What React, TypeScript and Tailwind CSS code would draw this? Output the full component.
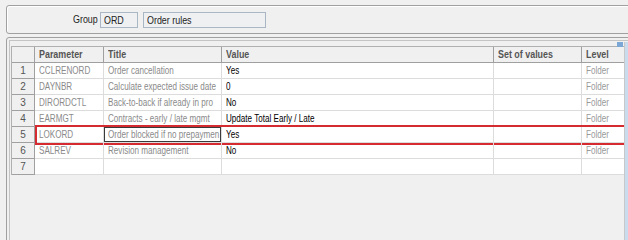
const rows: [number, string, string, string, string][] = [
  [1, "CCLRENORD", "Order cancellation", "Yes", "Folder"],
  [2, "DAYNBR", "Calculate expected issue date", "0", "Folder"],
  [3, "DIRORDCTL", "Back-to-back if already in pro", "No", "Folder"],
  [4, "EARMGT", "Contracts - early / late mgmt", "Update Total Early / Late", "Folder"],
  [5, "LOKORD", "Order blocked if no prepaymen", "Yes", "Folder"],
  [6, "SALREV", "Revision management", "No", "Folder"],
  [7, "", "", "", ""],
];

// the screenshot is squeezed sideways, so text is narrowed with scale-x
function T({ children }: { children: React.ReactNode }) {
  return <span className="inline-block origin-left scale-x-[0.81] whitespace-nowrap">{children}</span>;
}

const cell = "h-full overflow-hidden border-r border-b border-[#dcdcdc] pl-[4px] leading-[15px]";
const head = "h-full overflow-hidden border-r border-b border-[#a0a0a0] pl-[4px] leading-[15px]";

export default function App() {
  return (
    <div
      className="relative h-[240px] w-[628px] overflow-hidden bg-[#f0f0f0] text-[10px] text-[#222]"
      style={{ fontFamily: '"Liberation Sans", Arial, sans-serif' }}
    >
      {/* group header panel */}
      <div className="ml-[6px] mt-[5px] flex h-[29px] w-[630px] items-center rounded-[3px] border border-[#a0a0a0] shadow-[inset_1px_1px_0_#fff]">
        <span className="ml-[66px] w-[26px] text-[11px]"><T>Group</T></span>
        <div className="ml-[1px] h-[16px] w-[38px] overflow-hidden border border-[#a9b6c4] bg-[#eef0f2] pl-[3px] text-[11px] leading-[14px]"><T>ORD</T></div>
        <div className="ml-[5px] h-[16px] w-[123px] overflow-hidden border border-[#a9b6c4] bg-[#eef0f2] pl-[3px] text-[11px] leading-[14px]"><T>Order rules</T></div>
      </div>

      {/* parameters panel */}
      <div className="ml-[6px] mt-[3px] h-[220px] w-[630px] rounded-tl-[3px] border border-[#a0a0a0] pl-[2px] pt-[2px]">
        <div className="relative h-full border-l border-t border-[#c4c4c4] pl-[1px] pt-[5px]">
          <div className="absolute right-[12px] top-[1px] h-[5px] w-[6px] bg-[#7aa7d6]" />
          <div className="w-[614px] border-l border-t border-[#b0b0b0] bg-white">
            {/* header */}
            <div className="flex h-[16px] bg-[#f0f0f0] text-[11px] font-bold text-[#555]">
              <div className="h-full w-[23px] border-r border-b border-[#a0a0a0]" />
              <div className={`${head} w-[69px]`}><T>Parameter</T></div>
              <div className={`${head} w-[118px]`}><T>Title</T></div>
              <div className={`${head} w-[273px]`}><T>Value</T></div>
              <div className={`${head} w-[88px]`}><T>Set of values</T></div>
              <div className={`${head} w-[43px] pl-[3px]`}><T>Level</T></div>
            </div>
            {rows.map(([n, param, title, value, level]) => {
              const hit = n === 5;
              return (
                <div key={n} className="relative flex h-[16px]">
                  <div className="h-full w-[23px] border-r border-b border-[#a0a0a0] bg-[#f0f0f0] text-center leading-[15px] text-[#555]">{n}</div>
                  <div className={`${cell} w-[69px] text-[#8a8a8a]`}><T>{param}</T></div>
                  <div className={`${cell} relative w-[118px] text-[#8a8a8a]`}>
                    <T>{title}</T>
                    {hit && <div className="absolute inset-0 border border-[#3a3a3a]" />}
                  </div>
                  <div className={`${cell} w-[273px] text-black`}><T>{value}</T></div>
                  <div className={`${cell} w-[88px]`} />
                  <div className={`${cell} w-[43px] pl-[3px] text-[#999]`}><T>{level}</T></div>
                  {hit && (
                    <div className="absolute bottom-[-2px] left-[23px] right-[-2px] top-[-2px] border-2 border-[#d52b30]" />
                  )}
                </div>
              );
            })}
          </div>
        </div>
      </div>
      <div className="absolute right-0 top-[42px] h-[198px] w-[4px] border-l border-[#c8c8c8] bg-[#c9dcee]" />
    </div>
  );
}
